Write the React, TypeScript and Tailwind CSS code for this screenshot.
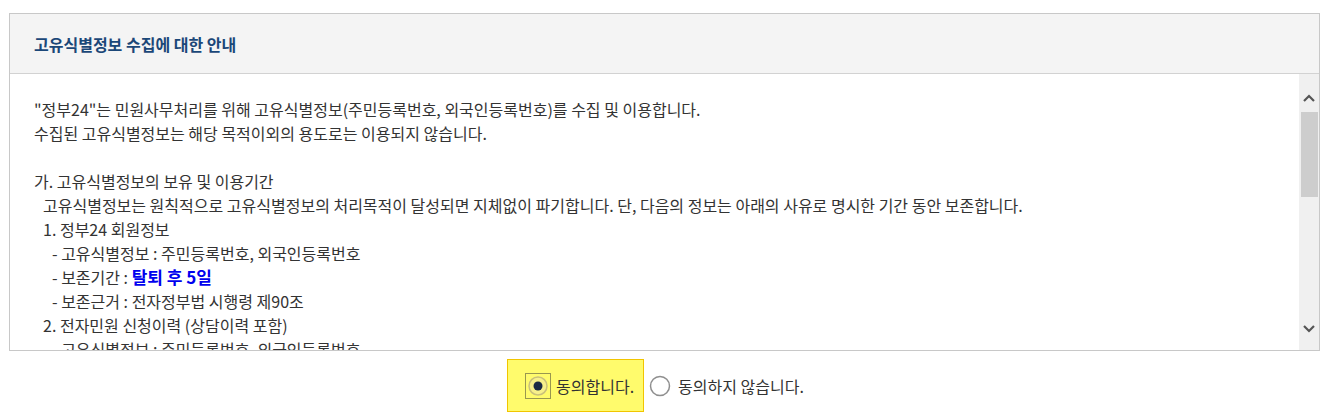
import React from 'react';

const FONT = '"Malgun Gothic", "Noto Sans CJK KR", "Noto Sans", sans-serif';

function Line({ indent = 0, children }: { indent?: number; children?: React.ReactNode }) {
  const pad = ['pl-0', 'pl-[9px]', 'pl-[18px]'][indent];
  return <div className={`h-[24px] leading-[24px] whitespace-nowrap ${pad}`}>{children}</div>;
}

function RadioOn() {
  return (
    <svg width="26" height="26" viewBox="0 0 26 26">
      <rect x="0.5" y="0.5" width="25" height="25" fill="none" stroke="#333" strokeDasharray="1 1" />
      <circle cx="13" cy="13" r="9" fill="#f7f08a" stroke="#c9c07a" strokeWidth="1.5" />
      <circle cx="13" cy="13" r="4.5" fill="#1b2a44" />
    </svg>
  );
}

function RadioOff() {
  return (
    <svg width="22" height="22" viewBox="0 0 22 22">
      <circle cx="11" cy="11" r="9.5" fill="#fff" stroke="#8f8f8f" strokeWidth="1.5" />
    </svg>
  );
}

export default function App() {
  return (
    <div className="w-[1336px] h-[418px] bg-white pt-[13px] pl-[9px] text-[#333]" style={{ fontFamily: FONT }}>
      <div className="w-[1311px] h-[338px] border border-[#c8c8c8] flex flex-col">
        {/* header */}
        <div className="h-[60px] shrink-0 bg-[#f4f4f4] border-b border-[#d2d2d2] flex items-center pl-[24px]">
          <h2 className="text-[16px] font-bold text-[#1b4778]">고유식별정보 수집에 대한 안내</h2>
        </div>

        {/* body */}
        <div className="flex flex-1 min-h-0">
          <div className="flex-1 overflow-hidden pl-[24px] pt-[23px] text-[16px]">
            <Line>"정부24"는 민원사무처리를 위해 고유식별정보(주민등록번호, 외국인등록번호)를 수집 및 이용합니다.</Line>
            <Line>수집된 고유식별정보는 해당 목적이외의 용도로는 이용되지 않습니다.</Line>
            <Line />
            <Line>가. 고유식별정보의 보유 및 이용기간</Line>
            <Line indent={1}>고유식별정보는 원칙적으로 고유식별정보의 처리목적이 달성되면 지체없이 파기합니다. 단, 다음의 정보는 아래의 사유로 명시한 기간 동안 보존합니다.</Line>
            <Line indent={1}>1. 정부24 회원정보</Line>
            <Line indent={2}>- 고유식별정보 : 주민등록번호, 외국인등록번호</Line>
            <Line indent={2}>
              - 보존기간 : <span className="text-[17px] font-bold text-[#0000ee]">탈퇴 후 5일</span>
            </Line>
            <Line indent={2}>- 보존근거 : 전자정부법 시행령 제90조</Line>
            <Line indent={1}>2. 전자민원 신청이력 (상담이력 포함)</Line>
            <Line indent={2}>- 고유식별정보 : 주민등록번호, 외국인등록번호</Line>
            <Line indent={2}>- 보존기간 : 민원 처리 완료 후 5년</Line>
          </div>

          {/* scrollbar */}
          <div className="w-[20px] shrink-0 bg-[#f0f0f0] flex flex-col items-center">
            <div className="h-[38px] w-full flex items-center justify-center pt-[10px]">
              <svg width="12" height="8" viewBox="0 0 12 8">
                <path d="M1 7 L6 2 L11 7" fill="none" stroke="#555" strokeWidth="2.2" />
              </svg>
            </div>
            <div className="w-[17px] h-[85px] bg-[#cdcdcd]" />
            <div className="flex-1" />
            <div className="h-[38px] w-full flex items-center justify-center pb-[4px]">
              <svg width="12" height="8" viewBox="0 0 12 8">
                <path d="M1 1 L6 6 L11 1" fill="none" stroke="#555" strokeWidth="2.2" />
              </svg>
            </div>
          </div>
        </div>
      </div>

      {/* agree */}
      <div className="w-[1311px] flex justify-center pt-[8px] pr-[18px]">
        <div className="flex items-center">
          <label className="w-[137px] h-[53px] bg-[#fffb6c] border border-[#f1c500] flex items-center pl-[17px] gap-[5px] text-[16px] whitespace-nowrap">
            <RadioOn />
            <span>동의합니다.</span>
          </label>
          <label className="flex items-center pl-[5px] gap-[7px] text-[16px] whitespace-nowrap">
            <RadioOff />
            <span>동의하지 않습니다.</span>
          </label>
        </div>
      </div>
    </div>
  );
}
